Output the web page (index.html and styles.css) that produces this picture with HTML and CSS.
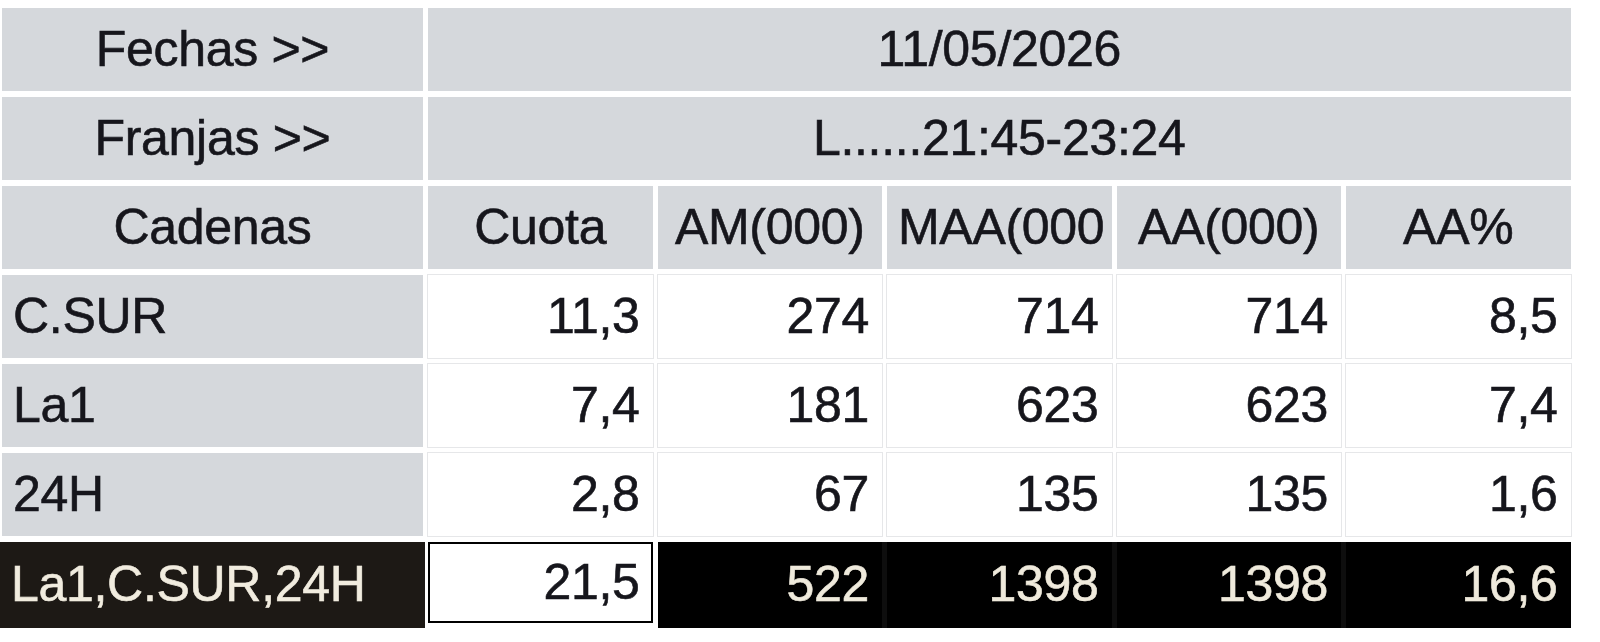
FILE: index.html
```html
<!DOCTYPE html>
<html lang="es">
<head>
<meta charset="utf-8">
<title>Audiencias</title>
<link rel="stylesheet" href="styles.css">
</head>
<body>
<div class="grid">
  <div class="cell head center">Fechas &gt;&gt;</div>
  <div class="cell head center span">11/05/2026</div>

  <div class="cell head center">Franjas &gt;&gt;</div>
  <div class="cell head center span">L......21:45-23:24</div>

  <div class="cell head center">Cadenas</div>
  <div class="cell head center">Cuota</div>
  <div class="cell head center">AM(000)</div>
  <div class="cell head clip">MAA(000</div>
  <div class="cell head center">AA(000)</div>
  <div class="cell head center">AA%</div>

  <div class="cell head label">C.SUR</div>
  <div class="cell data">11,3</div>
  <div class="cell data">274</div>
  <div class="cell data">714</div>
  <div class="cell data">714</div>
  <div class="cell data">8,5</div>

  <div class="cell head label">La1</div>
  <div class="cell data">7,4</div>
  <div class="cell data">181</div>
  <div class="cell data">623</div>
  <div class="cell data">623</div>
  <div class="cell data">7,4</div>

  <div class="cell head label">24H</div>
  <div class="cell data">2,8</div>
  <div class="cell data">67</div>
  <div class="cell data">135</div>
  <div class="cell data">135</div>
  <div class="cell data">1,6</div>

  <div class="cell total-label label">La1,C.SUR,24H</div>
  <div class="cell data total-sel">21,5</div>
  <div class="cell data total">522</div>
  <div class="cell data total joined">1398</div>
  <div class="cell data total joined">1398</div>
  <div class="cell data total joined">16,6</div>
</div>
</body>
</html>
```

FILE: styles.css
```css
html, body {
  margin: 0;
  padding: 0;
  background: #ffffff;
}

body {
  font-family: "Liberation Sans", Arial, sans-serif;
  font-size: 50px;
  color: #16161c;
}

.grid {
  display: grid;
  grid-template-columns: 421px repeat(5, 224.5px);
  grid-template-rows: repeat(6, 83px) 86px;
  column-gap: 5px;
  row-gap: 6px;
  padding: 8px 0 0 2px;
}

.cell {
  display: flex;
  align-items: center;
  white-space: nowrap;
  overflow: hidden;
  box-sizing: border-box;
  padding-bottom: 2px;
  -webkit-text-stroke: 0.6px currentColor;
  letter-spacing: -0.3px;
}

.head {
  background: #d5d8dc;
}

.center {
  justify-content: center;
}

.span {
  grid-column: 2 / span 5;
}

.clip {
  justify-content: flex-start;
  padding-left: 11px;
}

.label {
  justify-content: flex-start;
  padding-left: 11px;
}

.data {
  background: #ffffff;
  justify-content: flex-end;
  padding-right: 13px;
  box-shadow: 0 0 0 1px #e6e7e9;
}

.total-label {
  background: #1d1915;
  color: #f1ecdf;
  margin-left: -2px;
  margin-right: -2px;
}

.total-sel {
  background: #ffffff;
  border: 2px solid #000000;
  box-shadow: none;
  align-self: start;
  height: 81px;
  padding-right: 11px;
}

.total {
  background: #000000;
  color: #efeadc;
  box-shadow: none;
}

.joined {
  box-shadow: -5px 0 0 #0e0e0e;
}
```
